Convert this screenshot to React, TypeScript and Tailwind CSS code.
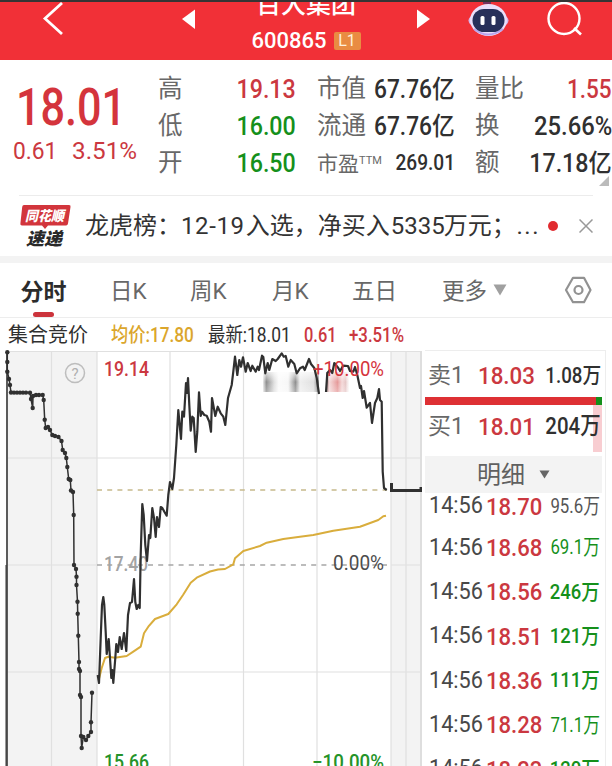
import type { ReactNode } from "react";
import clsx from "clsx";

const RED = "text-[#cb3840]";
const GREEN = "text-[#15901b]";
const DARK = "text-[#303030]";

// Narrow DIN-like figures: Roboto squeezed horizontally
function Num({ children, className }: { children: ReactNode; className?: string }) {
  return (
    <span className={clsx("inline-block whitespace-nowrap", className)}>
      {children}
    </span>
  );
}

function Header() {
  return (
    <header className="flex h-[60px] shrink-0 items-start justify-between border-t-[2px] border-[#343434] bg-[#f13037]">
      <svg width="200" height="58" viewBox="0 2 200 58" fill="none">
        <path d="M62 3 45 18.500 62 34" stroke="#fff" strokeWidth="2.8" />
        <path d="M182 19 195 9.5V29Z" fill="#fff" />
      </svg>
      <div className="flex w-[212px] flex-col items-center overflow-hidden text-white">
        <div className="-mt-[14px] h-[33px] text-[25px] leading-[33px] font-medium">百大集团</div>
        <div className="mt-[5px] flex items-center gap-[7px]">
          <span className="text-[22px] leading-[30px] font-medium">600865</span>
          <span className="flex h-[18px] w-[27px] items-center justify-center rounded-[2px] bg-[#e98c42] text-[16px] leading-[18px] text-[#fff0dc]">
            L1
          </span>
        </div>
      </div>
      <svg width="200" height="58" viewBox="412 2 200 58" fill="none">
        <path d="M417 9.5V28.5L430 19Z" fill="#fff" />
        <path d="M483 3h8" stroke="#77315f" strokeWidth="2" />
        <ellipse cx="488.500" cy="20.500" rx="20" ry="9" fill="#d6b9ee" />
        <ellipse cx="488.500" cy="20" rx="18.500" ry="16" fill="#eadffa" />
        <path d="M474 29Q488 40 503 29" stroke="#b9a3ee" strokeWidth="2" />
        <rect x="472.500" y="9" width="32" height="23" rx="11.500" fill="#27305a" />
        <rect x="480.500" y="16" width="4" height="9" rx="1.500" fill="#fff" />
        <rect x="491.500" y="16" width="4" height="9" rx="1.500" fill="#fff" />
        <circle cx="564" cy="18.500" r="15.500" stroke="#fff" strokeWidth="2.400" />
        <path d="m574 28 7 6.500" stroke="#fff" strokeWidth="2.600" />
      </svg>
    </header>
  );
}

interface StatProps {
  label: ReactNode;
  value: ReactNode;
  color?: string;
  className?: string;
}

function Stat({ label, value, color = DARK, className = "text-[25px] scale-x-[.93]" }: StatProps) {
  return (
    <div className="flex h-[37px] items-center justify-between">
      <span className="whitespace-nowrap text-[24.500px] text-[#686868]">{label}</span>
      <Num className={clsx("origin-right font-medium", color, className)}>{value}</Num>
    </div>
  );
}

function Quote() {
  return (
    <section className="relative flex h-[135px] shrink-0 pt-[11px]">
      <div className="w-[158px] shrink-0 pl-[13px]">
        <Num className="mt-[10px] ml-[3px] origin-left scale-x-[.83] text-[52px] leading-[54px] font-medium text-[#d4343c]">
          18.01
        </Num>
        <div className={clsx("flex h-[32px] items-center text-[24.500px]", RED)}>
          <Num className="w-[59px] origin-left scale-x-[.93]">0.61</Num>
          <Num className="origin-left scale-x-[.99]">3.51%</Num>
        </div>
      </div>
      <div className="w-[138px] shrink-0">
        <Stat label="高" value="19.13" color={RED} />
        <Stat label="低" value="16.00" color={GREEN} />
        <Stat label="开" value="16.50" color={GREEN} />
      </div>
      <div className="ml-[21px] w-[138px] shrink-0">
        <Stat label="市值" value="67.76亿" className="text-[25px] scale-x-[.91]" />
        <Stat label="流通" value="67.76亿" className="text-[25px] scale-x-[.91]" />
        <Stat
          label={
            <span className="text-[21px]">
              市盈<sup className="-top-[7px] text-[11px]">TTM</sup>
            </span>
          }
          value="269.01"
          className="text-[21.500px] scale-x-[.89]"
        />
      </div>
      <div className="ml-[20px] w-[137px] shrink-0">
        <Stat label="量比" value="1.55" color={RED} className="text-[25px] scale-x-[.9]" />
        <Stat label="换" value="25.66%" className="text-[25px] scale-x-[.95]" />
        <Stat label="额" value="17.18亿" className="text-[25px] scale-x-[.93]" />
      </div>
      <svg className="absolute right-[3px] bottom-[9px]" width="10" height="10">
        <path d="M10 0V10H0Z" fill="#bbb" />
      </svg>
    </section>
  );
}

function NewsBar() {
  return (
    <section className="flex h-[68px] shrink-0 flex-col border-b-[7px] border-[#f3f3f3]">
      <div className="mx-[19px] h-px bg-[#ececec]" />
      <div className="flex h-[60px] items-center pl-[20px]">
        <svg width="52" height="44" viewBox="0 0 52 44">
          <path d="M4 1H49Q51 1 50.500 3L48 19.500Q47.700 21.500 46 21.500H28L25 25 22 21.500H2Q0 21.500 .4 19.500L2.200 3Q2.400 1 4 1Z" fill="#d2353c" />
          <text x="5" y="16.500" fontSize="14" fontWeight="900" fill="#fff" textLength="39" lengthAdjust="spacingAndGlyphs" fontStyle="italic">同花顺</text>
          <text x="6" y="41" fontSize="17.500" fontWeight="900" fill="#292929" textLength="36" lengthAdjust="spacingAndGlyphs" fontStyle="italic">速递</text>
        </svg>
        <div className="ml-[13px] flex w-[455px] items-center whitespace-nowrap text-[24px] leading-[30px] text-[#333]">
          <span className="w-[96px]">龙虎榜：</span>
          <span className="w-[65px] tracking-[0.600px]">12-19</span>
          <span className="w-[72px]">入选，</span>
          <span className="w-[73px]">净买入</span>
          <span className="w-[53px]">5335</span>
          <span className="w-[73px]">万元；</span>
          <span className="tracking-[1.500px]">...</span>
        </div>
        <span className="ml-[8px] h-[10px] w-[10px] rounded-full bg-[#e12b30]" />
        <svg className="ml-[21px]" width="14" height="14" viewBox="0 0 14 14">
          <path d="M.5.5 13.500 13.500M13.500.5.5 13.500" stroke="#999" strokeWidth="1.500" />
        </svg>
      </div>
    </section>
  );
}

function Tabs() {
  return (
    <nav className="flex h-[55px] shrink-0 items-center border-b border-[#ededed] text-[22.500px] whitespace-nowrap text-[#686868]">
      <div className="flex h-full w-[90px] flex-col items-center justify-end pr-[3px] font-bold text-[#2c2c2c]">
        <span className="mb-[3px] text-[23px] leading-[33px]">分时</span>
        <span className="h-[5px] w-[21px] rounded-full bg-[#cc343c]" />
      </div>
      <div className="ml-[20px] flex h-[36px] items-end leading-[33px]">
        <span className="w-[80px]">日K</span>
        <span className="w-[82px]">周K</span>
        <span className="w-[80px]">月K</span>
        <span className="w-[90px]">五日</span>
        <span className="w-[51px]">更多</span>
      </div>
      <svg width="14" height="12" viewBox="0 0 14 12">
        <path d="M.5.5h13L7 11.500Z" fill="#a0a0a0" />
      </svg>
      <svg className="ml-[57px]" width="29" height="28" viewBox="0 0 29 28" fill="none" stroke="#929292" strokeWidth="2.200">
        <path d="M9 1.800H20L26.500 14 20 26.200H9L2 14Z" strokeLinejoin="round" />
        <circle cx="14.500" cy="14" r="4" />
      </svg>
    </nav>
  );
}

function Legend() {
  return (
    <div className="flex h-[32px] shrink-0 items-center pl-[8px] pt-[3px] text-[20px] leading-[29px] whitespace-nowrap text-[#303030]">
      <span className="w-[103px]">集合竞价</span>
      <div className="w-[97px] text-[#dba62c]">
        <Num className="origin-left scale-x-[.86] font-medium">均价:17.80</Num>
      </div>
      <div className="w-[96px]">
        <Num className="origin-left scale-x-[.87]">最新:18.01</Num>
      </div>
      <div className={clsx("w-[45px]", RED)}>
        <Num className="origin-left scale-x-[.82] font-medium">0.61</Num>
      </div>
      <Num className={clsx("origin-left scale-x-[.84] font-medium", RED)}>+3.51%</Num>
    </div>
  );
}

const auction: [number, number][] = [
  [7.3, 352.3], [7.3, 362], [7.3, 371.7], [9, 379], [10, 385], [11, 392.5], [14, 392.6], [17, 392.6], [20, 392.6],
  [23, 392.6], [26, 392.6], [30, 392.7], [31, 399], [32.7, 408], [33, 396], [36, 395], [39, 395], [42.7, 395],
  [43.7, 400], [44.7, 419.7], [45.7, 428], [48, 427], [50, 430], [52.3, 435], [55, 436], [58.5, 437], [61.5, 441],
  [62.7, 450], [65, 453], [66.3, 458], [67.3, 467], [68.7, 479], [70.3, 480], [71, 490.5], [73, 492], [73.7, 515],
  [74, 565], [76, 569], [76.5, 576.7], [76.5, 585], [77.5, 601.7], [77.7, 613.7], [78.3, 635.7], [79, 662],
  [79, 669], [80, 671], [80, 695], [81, 697], [81, 736], [81.7, 748], [83.3, 737], [86, 740], [88.3, 736],
  [91, 732], [91, 722.3], [92, 692.7],
];

const price: [number, number][] = [
  [97.7, 675], [99, 683], [100.7, 638], [102, 605], [103.3, 597], [104.3, 605], [105.7, 632], [106.7, 654],
  [108.7, 639], [110, 658], [111.3, 678], [112.3, 670], [113.3, 683], [115.3, 658], [116.3, 644], [118, 652],
  [119.7, 637], [121.7, 649], [124, 633], [126.3, 651], [128, 615], [130, 603], [132, 602], [134, 579],
  [135.3, 602], [136.7, 609], [138.3, 605], [139.7, 608], [140.7, 555], [142.3, 504], [143.7, 515], [145.3, 545],
  [147, 561], [149, 535], [150.3, 538], [152.3, 508], [154, 518], [155.7, 537], [157, 517], [159, 527],
  [160.7, 507], [162.3, 508], [164.5, 512], [166.7, 515.7], [168.3, 495], [170, 482], [172.3, 489], [174, 478],
  [176.3, 445], [178.3, 410], [181, 439], [182.3, 411.7], [184, 416.7], [186, 383], [187, 393], [188, 378],
  [189.3, 405], [190.7, 430.7], [192.3, 416.7], [193.7, 418], [195.7, 452], [197.3, 431.7], [199, 392.3],
  [200.7, 416], [202, 411.7], [204.3, 415], [206.7, 415.7], [209.3, 421.7], [211, 431.7], [212, 398], [215.3, 416],
  [217.7, 406.7], [220.7, 413.3], [223.3, 416.7], [225.3, 425], [228, 398], [231.7, 385], [233.3, 371.7],
  [235, 356.7], [237.3, 375], [239.3, 360], [241, 366.7], [243, 357.3], [245.7, 371.7], [247.7, 363], [250.7, 371],
  [252.3, 365.7], [255.7, 371.7], [257.7, 366.7], [259, 370], [262, 355.7], [263.3, 357], [265.3, 373.3],
  [267.7, 363], [269.3, 370], [272.3, 359], [275.7, 361], [277.7, 359], [281.7, 353.3], [283.7, 356.7],
  [285.7, 356], [288.3, 366.7], [290.7, 360], [294.3, 364], [296.7, 373.3], [300, 368.3], [303, 366.7],
  [304.7, 370], [309, 359], [311, 364], [314.3, 368], [316.7, 378], [319, 394],
];

const priceTail: [number, number][] = [
  [326, 392], [327.3, 373], [330, 370], [332.3, 373], [334.3, 363], [338.3, 368], [340, 371], [343.3, 365.7],
  [348, 366], [350, 371], [353.3, 371.7], [355, 367], [357.3, 375], [360, 388], [361, 386], [362.7, 398], [364, 391],
  [366.7, 407.7], [370, 403], [372, 423], [375, 403], [377.3, 398], [379, 389], [380, 400], [381.7, 401.7],
  [382.7, 471.7], [384, 488], [386.7, 490],
];

const average: [number, number][] = [
  [98.7, 680], [101.7, 668], [105, 658], [108.3, 656.7], [115, 657.7], [126.7, 656], [133.3, 651.7], [140.7, 646.7],
  [144, 633.3], [148.3, 626.7], [155, 619], [168.3, 614], [176.7, 604.3], [183, 595], [190.7, 582.7], [196.7, 577.7],
  [210, 571.5], [218, 569.5], [225, 569], [233.3, 564.3], [235, 558.3], [243.3, 551], [260, 546], [266.7, 542.7],
  [283.3, 539], [300, 536.7], [313.3, 535], [333.3, 530.7], [360, 526.7], [378.3, 520], [383.3, 516.3], [386, 515.7],
];

const toPoints = (pts: [number, number][]) => pts.map((p) => p.join(",")).join(" ");

function Chart() {
  return (
    <svg className="block shrink-0" width="422" height="416" viewBox="0 350 422 416" fill="none">
      <defs>
        <linearGradient id="fade" x1="0" y1="0" x2="1" y2="0">
          <stop offset="0" stopColor="#333" stopOpacity="0.1" />
          <stop offset="0.060" stopColor="#333" stopOpacity="0.550" />
          <stop offset="0.200" stopColor="#333" stopOpacity="0.150" />
          <stop offset="0.280" stopColor="#333" stopOpacity="0.020" />
          <stop offset="0.450" stopColor="#333" stopOpacity="0.040" />
          <stop offset="0.580" stopColor="#333" stopOpacity="0.550" />
          <stop offset="0.660" stopColor="#333" stopOpacity="0.080" />
          <stop offset="0.900" stopColor="#333" stopOpacity="0.150" />
          <stop offset="1" stopColor="#333" stopOpacity="0.600" />
        </linearGradient>
        <linearGradient id="fadeRed" x1="0" y1="0" x2="1" y2="0">
          <stop offset="0" stopColor="#222" stopOpacity="0.800" />
          <stop offset="0.150" stopColor="#c44" stopOpacity="0.200" />
          <stop offset="0.500" stopColor="#c33" stopOpacity="0.500" />
          <stop offset="0.700" stopColor="#c44" stopOpacity="0.200" />
          <stop offset="0.850" stopColor="#a44" stopOpacity="0.300" />
          <stop offset="1" stopColor="#c88" stopOpacity="0.050" />
        </linearGradient>
        <linearGradient id="veil" x1="0" y1="0" x2="0" y2="1">
          <stop offset="0" stopColor="#fff" stopOpacity="0.800" />
          <stop offset="0.500" stopColor="#fff" stopOpacity="0" />
          <stop offset="1" stopColor="#fff" stopOpacity="0.300" />
        </linearGradient>
      </defs>
      <path d="M8 351H97V766H8ZM391 351H421V766H391Z" fill="#f3f3f3" />
      <path d="M7 351.500H421M8 458H421M8 672H421M8 565H97M391 565H421M51.500 351V766M97 351V766M170 351V766M243.500 351V766M317 351V766M391 351V766M406 351V766" stroke="#e0e0e0" strokeWidth="1.200" />
      <path d="M421 351V766" stroke="#dedede" strokeWidth="2" />
      <path d="M97 490H387" stroke="#c6b98c" strokeWidth="1.600" strokeDasharray="5 5.200" />
      <path d="M97 565H387" stroke="#a6a6a6" strokeWidth="1.600" strokeDasharray="5 5.200" />
      <path d="M7 352V766" stroke="#333" strokeWidth="1.600" />
      <path d="M6 565V766" stroke="#333" strokeWidth="1" />
      <text x="104" y="570.500" fontSize="19.500" fontWeight="500" fill="#a3a3a3" textLength="44" lengthAdjust="spacingAndGlyphs">17.40</text>
      <polyline points={toPoints(average)} stroke="#d9ad3c" strokeWidth="2" strokeLinejoin="round" />
      <rect x="263" y="372" width="56" height="20" fill="url(#fade)" />
      <rect x="326" y="372" width="23" height="20" fill="url(#fadeRed)" />
      <rect x="262" y="371" width="88" height="22" fill="url(#veil)" />
      <polyline points={toPoints(price)} stroke="#303030" strokeWidth="2.200" strokeLinejoin="round" />
      <polyline points={toPoints(priceTail)} stroke="#303030" strokeWidth="2.200" strokeLinejoin="round" />
      <polyline points={toPoints(auction)} stroke="#303030" strokeWidth="1.500" />
      {auction.map(([x, y], i) => (
        <circle key={i} cx={x} cy={y} r="2.200" fill="#303030" />
      ))}
      <path d="M391.500 483V490.500H421V487" stroke="#303030" strokeWidth="3" />
      <circle cx="75" cy="373" r="9.500" stroke="#bdbdbd" strokeWidth="1.500" />
      <text x="75" y="378.500" fontSize="15" fill="#b0b0b0" textAnchor="middle">?</text>
      <text x="104" y="376" fontSize="20" fontWeight="500" fill="#cb3840" textLength="45" lengthAdjust="spacingAndGlyphs">19.14</text>
      <text x="313" y="376" fontSize="20" fill="#d5343c" textLength="71" lengthAdjust="spacingAndGlyphs">+10.00%</text>
      <text x="333" y="570" fontSize="20" fill="#4c4c4c" textLength="51" lengthAdjust="spacingAndGlyphs">0.00%</text>
      <text x="104" y="768.500" fontSize="20" fontWeight="500" fill="#259329" textLength="45" lengthAdjust="spacingAndGlyphs">15.66</text>
      <text x="312" y="768.500" fontSize="20" fontWeight="500" fill="#259329" textLength="72" lengthAdjust="spacingAndGlyphs">−10.00%</text>
    </svg>
  );
}

const trades = [
  { price: "18.70", volume: "95.6万", color: "text-[#555]" },
  { price: "18.68", volume: "69.1万", color: GREEN },
  { price: "18.56", volume: "246万", color: GREEN },
  { price: "18.51", volume: "121万", color: GREEN },
  { price: "18.36", volume: "111万", color: GREEN },
  { price: "18.28", volume: "71.1万", color: GREEN },
  { price: "18.23", volume: "120万", color: GREEN },
];

function BookRow({ side, price, volume, className }: { side: string; price: string; volume: string; className?: string }) {
  return (
    <div className="flex h-[42px] items-center pl-[3px]">
      <span className="w-[50px] text-[23px] text-[#686868]">{side}</span>
      <Num className={clsx("w-[58px] origin-left scale-x-[.93] text-[24px] font-medium", RED)}>{price}</Num>
      <Num className={clsx("ml-auto mr-[1px] origin-right font-medium text-[#303030]", className)}>{volume}</Num>
    </div>
  );
}

function OrderBook() {
  return (
    <aside className="ml-[3px] w-[181px] shrink-0 border-t border-r border-[#ededed] pr-[3px]">
      <div className="pt-[4px]">
        <BookRow side="卖1" price="18.03" volume="1.08万" className="text-[21.500px] scale-x-[.87]" />
      </div>
      <div className="flex h-[8px] bg-[#de3034]">
        <span className="ml-auto w-[6px] bg-[#15901b]" />
      </div>
      <div className="mb-[4px] h-[47px] bg-linear-to-r from-transparent from-95% to-[#f8cdd1] to-95% pt-px">
        <BookRow side="买1" price="18.01" volume="204万" className="text-[23.500px] scale-x-[.87]" />
      </div>
      <div className="flex h-[37px] items-center justify-center gap-[14px] bg-[#f3f3f3] text-[24px] text-[#606060]">
        <span>明细</span>
        <svg width="11" height="9">
          <path d="M.5.5h10L5.500 8.500Z" fill="#666" />
        </svg>
      </div>
      <div className="-mt-[9px]">
        {trades.map((t, i) => (
          <div key={t.price} className={clsx("flex items-center pl-[4px]", i === 0 ? "h-[42px] pt-[3px]" : "h-[44.300px]")}>
            <Num className="w-[57px] shrink-0 origin-left scale-x-[.94] text-[23px] text-[#484848]">14:56</Num>
            <Num className={clsx("w-[50px] shrink-0 origin-left scale-x-[.92] text-[24px] font-medium", RED)}>{t.price}</Num>
            <Num
              className={clsx(
                "ml-auto mr-[2px] origin-right text-[21px]",
                t.volume.includes(".") ? "scale-x-[.8]" : "scale-x-[.88] font-medium",
                t.color,
              )}
            >
              {t.volume}
            </Num>
          </div>
        ))}
      </div>
    </aside>
  );
}

export default function App() {
  return (
    <div className="flex h-[766px] w-[612px] flex-col overflow-hidden bg-white font-[Roboto,'Noto_Sans_CJK_SC',sans-serif]">
      <Header />
      <Quote />
      <NewsBar />
      <Tabs />
      <Legend />
      <main className="flex h-[416px] shrink-0 overflow-hidden">
        <Chart />
        <OrderBook />
      </main>
    </div>
  );
}
